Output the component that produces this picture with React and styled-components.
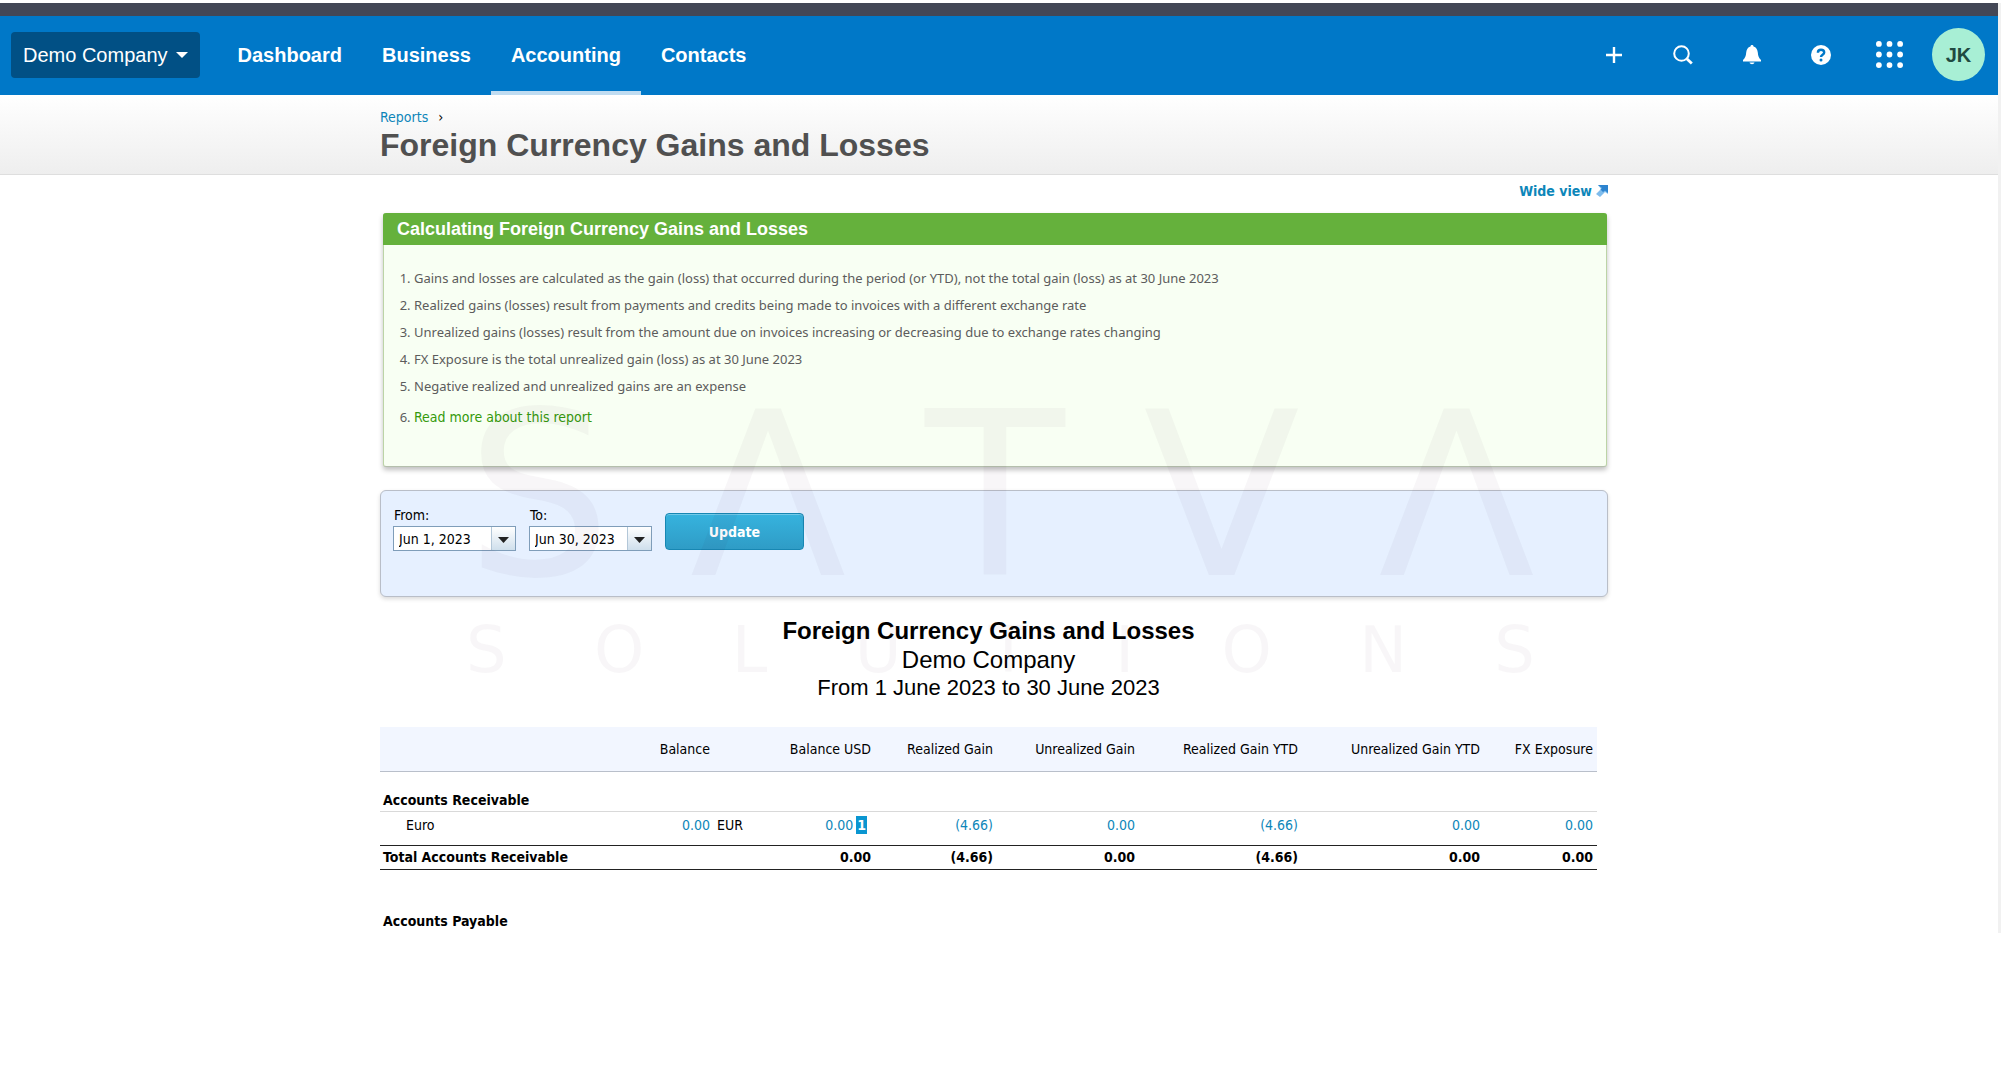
import React from 'react';
import styled, { createGlobalStyle } from 'styled-components';

const GlobalStyle = createGlobalStyle`
  * {
    box-sizing: border-box;
  }

  body {
    margin: 0;
    background: #fff;
    color: #000;
    font-family: 'DejaVu Sans Condensed', 'DejaVu Sans', sans-serif;
    font-size: 14px;
    line-height: 18px;
  }

  a {
    color: #0d86b9;
    text-decoration: none;
  }
`;

const sans = "'Liberation Sans', Arial, sans-serif";

const Page = styled.div`
  margin-top: 3px;
  border-right: 3px solid #f1f1f1;
`;

const TopStrip = styled.div`
  height: 13px;
  background: #434756;
`;

const NavBar = styled.header`
  display: flex;
  align-items: center;
  height: 79px;
  padding: 0 13px 2px 11px;
  background: #0078c8;
  font-family: ${sans};
  font-size: 20px;
`;

const OrgButton = styled.button`
  display: flex;
  align-items: center;
  gap: 8px;
  height: 46px;
  padding: 0 12px;
  margin-right: 18px;
  border: 0;
  border-radius: 4px;
  background: #015085;
  color: #fff;
  font: inherit;
`;

const NavLinks = styled.nav`
  display: flex;
  align-self: stretch;
  flex: 1;
  margin-bottom: -2px;
`;

const NavLink = styled.a`
  display: flex;
  align-items: center;
  padding: 2px 20px 0;
  border-bottom: 4px solid ${({ $active }) => ($active ? '#c0dcf1' : 'transparent')};
  color: #fff;
  font-weight: 700;
`;

const IconButton = styled.button`
  display: flex;
  align-items: center;
  justify-content: center;
  width: 69px;
  height: 46px;
  padding: 0;
  border: 0;
  background: none;
  color: #fff;
`;

const Avatar = styled.button`
  width: 53px;
  height: 53px;
  margin-left: 8px;
  padding: 0;
  border: 0;
  border-radius: 50%;
  background: #a8efd5;
  color: #1f4a41;
  font: inherit;
  font-weight: 700;
`;

const TitleBar = styled.div`
  height: 80px;
  padding: 13px 10px 0 0;
  border-bottom: 1px solid #dedede;
  background: linear-gradient(#fff, #eee);
`;

const Column = styled.div`
  position: relative;
  max-width: 1228px;
  margin: 0 auto;
`;

const Breadcrumb = styled.div`
  display: flex;
  gap: 10px;
  height: 19px;
`;

const PageTitle = styled.h1`
  margin: 0;
  color: #505050;
  font-family: ${sans};
  font-size: 32px;
  line-height: 36px;
`;

const Main = styled.main`
  padding-right: 10px;
`;

const WideView = styled.a`
  display: flex;
  align-items: center;
  justify-content: flex-end;
  gap: 4px;
  height: 38px;
  padding-bottom: 6px;
  font-weight: 700;
`;

const InfoPanel = styled.section`
  margin: 0 1px 23px 3px;
  border: 1px solid #bcd4a6;
  border-top: 0;
  border-bottom-color: #b4bfac;
  border-radius: 3px;
  background: #f8fff3;
  box-shadow: 0 3px 5px rgba(0, 0, 0, 0.25);
`;

const InfoTitle = styled.h2`
  margin: 0 -1px;
  padding: 0 14px;
  border-radius: 3px 3px 0 0;
  background: #65b13c;
  color: #fff;
  font-family: ${sans};
  font-size: 18px;
  line-height: 32px;
`;

const InfoList = styled.ol`
  margin: 0;
  padding: 20px 30px 31px;
  color: #5c5c5c;
  font-family: 'Noto Sans', sans-serif;
  font-size: 13px;
  line-height: 27px;

  a {
    color: #349a0b;
    font-family: 'DejaVu Sans Condensed', 'DejaVu Sans', sans-serif;
    font-size: 14px;
    line-height: 35px;
  }
`;

const FilterPanel = styled.form`
  display: flex;
  align-items: flex-start;
  gap: 13px;
  min-height: 107px;
  padding: 15px 12px;
  border: 1px solid #b9bec8;
  border-radius: 6px;
  background: #e6f0ff;
  box-shadow: 0 2px 4px rgba(0, 0, 0, 0.15);
`;

const Field = styled.div`
  display: flex;
  flex-direction: column;
  gap: 2px;

  label {
    padding-left: 1px;
  }
`;

const DateBox = styled.div`
  display: flex;
  width: 123px;
  height: 25px;
  border: 1px solid #7f9db9;
  background: #fff;

  input {
    flex: 1;
    min-width: 0;
    padding: 0 5px;
    border: 0;
    background: none;
    color: #000;
    font: inherit;
  }

  button {
    width: 24px;
    padding: 0;
    border: 0;
    border-left: 1px solid #b3c7d8;
    background: linear-gradient(#fff, #cfdfec);
  }
`;

const UpdateButton = styled.button`
  width: 139px;
  height: 37px;
  margin-top: 7px;
  border: 1px solid #1787b3;
  border-radius: 4px;
  background: linear-gradient(#36b3de, #2f9cc6);
  box-shadow: inset 0 1px 0 rgba(255, 255, 255, 0.3);
  color: #fff;
  font: inherit;
  font-weight: 700;
`;

const ReportHeading = styled.div`
  margin: 20px 11px 0 0;
  font-family: ${sans};
  font-size: 24px;
  line-height: 28px;
  text-align: center;

  h2 {
    margin: 0 0 1px;
    font-size: 24px;
  }

  p {
    margin: 0;
  }

  p:last-child {
    font-size: 22px;
  }
`;

const ReportTable = styled.table`
  width: calc(100% - 11px);
  margin-top: 25px;
  border-collapse: collapse;
  table-layout: fixed;

  th,
  td {
    padding: 0 4px 0 3px;
    text-align: right;
    font-weight: 400;
    white-space: nowrap;
  }

  th:first-child,
  td:first-child {
    text-align: left;
  }
`;

const HeadRow = styled.tr`
  height: 44px;
  border-bottom: 1px solid #b9bfca;
  background: #f2f6ff;
`;

const SectionRow = styled.tr`
  height: ${({ $height }) => $height}px;
  border-bottom: 1px solid ${({ $line }) => ($line ? '#d9d9d9' : 'transparent')};

  && th {
    padding-bottom: 2px;
    font-weight: 700;
    vertical-align: bottom;
  }
`;

const AccountRow = styled.tr`
  height: 34px;

  && td:first-child {
    padding-left: 26px;
  }

  && td {
    padding-top: 4px;
    vertical-align: top;
  }

  && td:nth-child(3) {
    text-align: left;
  }
`;

const TotalRow = styled.tr`
  height: 24px;
  border-top: 1px solid #222;
  border-bottom: 1px solid #222;

  && td {
    font-weight: 700;
  }
`;

const Marker = styled.span`
  display: inline-block;
  margin: 0 4px 0 3px;
  padding: 0 1px;
  background: #0a96d1;
  color: #fff;
  font-weight: 700;
`;

/* Faint brand mark laid over the report */
const Watermark = styled.div`
  position: absolute;
  top: 211px;
  left: 86px;
  right: 73px;
  color: rgba(60, 10, 60, 0.035);
  font-family: 'DejaVu Sans', sans-serif;
  pointer-events: none;
`;

const WatermarkLine = styled.div`
  display: flex;
  justify-content: space-between;
  font-size: ${({ $size }) => $size}px;
  line-height: ${({ $height }) => $height}px;
`;

const navItems = ['Dashboard', 'Business', 'Accounting', 'Contacts'];

const notes = [
  'Gains and losses are calculated as the gain (loss) that occurred during the period (or YTD), not the total gain (loss) as at 30 June 2023',
  'Realized gains (losses) result from payments and credits being made to invoices with a different exchange rate',
  'Unrealized gains (losses) result from the amount due on invoices increasing or decreasing due to exchange rates changing',
  'FX Exposure is the total unrealized gain (loss) as at 30 June 2023',
  'Negative realized and unrealized gains are an expense',
];

const columns = [
  { label: '' },
  { label: 'Balance', width: 94 },
  { label: '', width: 61 },
  { label: 'Balance USD', width: 100 },
  { label: 'Realized Gain', width: 122 },
  { label: 'Unrealized Gain', width: 142 },
  { label: 'Realized Gain YTD', width: 163 },
  { label: 'Unrealized Gain YTD', width: 182 },
  { label: 'FX Exposure', width: 113 },
];

const gains = ['(4.66)', '0.00', '(4.66)', '0.00', '0.00'];

function DateField({ id, label, value }) {
  return (
    <Field>
      <label htmlFor={id}>{label}</label>
      <DateBox>
        <input id={id} type="text" defaultValue={value} />
        <button type="button" aria-label="Open calendar">
          <svg width="11" height="6" viewBox="0 0 11 6">
            <path d="M0 0h11L5.5 6z" fill="#222" />
          </svg>
        </button>
      </DateBox>
    </Field>
  );
}

function NavIcons() {
  return (
    <>
      <IconButton aria-label="Create new">
        <svg width="16" height="16" viewBox="0 0 16 16" stroke="currentColor" strokeWidth="2.4">
          <path d="M8 0v16M0 8h16" />
        </svg>
      </IconButton>
      <IconButton aria-label="Search">
        <svg width="20" height="20" viewBox="0 0 20 20" fill="none" stroke="currentColor">
          <circle cx="8.5" cy="8.5" r="7.3" strokeWidth="2" />
          <path d="M13.8 13.8l5 4.8" strokeWidth="2.8" />
        </svg>
      </IconButton>
      <IconButton aria-label="Notifications">
        <svg width="18" height="20" viewBox="0 0 18 20" fill="currentColor">
          <path d="M9 0c.9 0 1.5.6 1.5 1.4 2.8.8 4 3.1 4.3 6.1.3 3.6 1 5.5 3.2 7.5v1.5H0V15c2.2-2 2.9-3.9 3.2-7.5.3-3 1.500-5.300 4.300-6.100C7.500.6 8.100 0 9 0z" />
          <path d="M6.500 17.600h5c-.4 1.200-1.300 1.700-2.500 1.700s-2.100-.5-2.500-1.700z" />
        </svg>
      </IconButton>
      <IconButton aria-label="Help">
        <svg width="20" height="20" viewBox="0 0 20 20" fill="none">
          <circle cx="10" cy="10" r="10" fill="currentColor" />
          <path d="M6.9 7.7C6.9 5.8 8.2 4.7 10 4.7s3.200 1.100 3.200 2.800c0 2.200-3.200 2.300-3.200 4.500" stroke="#0078c8" strokeWidth="2.4" />
          <circle cx="10" cy="14.9" r="1.5" fill="#0078c8" />
        </svg>
      </IconButton>
      <IconButton aria-label="Apps">
        <svg width="27" height="27" viewBox="0 0 28 28" fill="currentColor">
          {[3, 14, 25].map((y) => [3, 14, 25].map((x) => <circle key={`${x}-${y}`} cx={x} cy={y} r="3" />))}
        </svg>
      </IconButton>
    </>
  );
}

export default function App() {
  return (
    <Page>
      <GlobalStyle />
      <TopStrip />
      <NavBar>
        <OrgButton>
          Demo Company
          <svg width="12" height="6" viewBox="0 0 12 6">
            <path d="M0 0h12L6 6z" fill="#fff" />
          </svg>
        </OrgButton>
        <NavLinks>
          {navItems.map((item) => (
            <NavLink key={item} href="#" $active={item === 'Accounting'}>
              {item}
            </NavLink>
          ))}
        </NavLinks>
        <NavIcons />
        <Avatar>JK</Avatar>
      </NavBar>

      <TitleBar>
        <Column>
          <Breadcrumb>
            <a href="#">Reports</a>
            <span>›</span>
          </Breadcrumb>
          <PageTitle>Foreign Currency Gains and Losses</PageTitle>
        </Column>
      </TitleBar>

      <Main>
        <Column>
          <WideView href="#">
            Wide view
            <svg width="12" height="12" viewBox="0 0 12 12">
              <path d="M2 0h10v9L9 7l-5 5-4-3 5-5z" fill="#7fbcec" />
              <path d="M2 0h10v8L9 5.5 7 7 4.5 4.5 6 3z" fill="#2c83cf" />
            </svg>
          </WideView>

          <InfoPanel>
            <InfoTitle>Calculating Foreign Currency Gains and Losses</InfoTitle>
            <InfoList>
              {notes.map((note) => (
                <li key={note}>{note}</li>
              ))}
              <li>
                <a href="#">Read more about this report</a>
              </li>
            </InfoList>
          </InfoPanel>

          <FilterPanel>
            <DateField id="from" label="From:" value="Jun 1, 2023" />
            <DateField id="to" label="To:" value="Jun 30, 2023" />
            <UpdateButton type="button">Update</UpdateButton>
          </FilterPanel>

          <ReportHeading>
            <h2>Foreign Currency Gains and Losses</h2>
            <p>Demo Company</p>
            <p>From 1 June 2023 to 30 June 2023</p>
          </ReportHeading>

          <ReportTable>
            <colgroup>
              {columns.map((col, index) => (
                <col key={index} width={col.width} />
              ))}
            </colgroup>
            <thead>
              <HeadRow>
                {columns.map((col, index) => (
                  <th key={index}>{col.label}</th>
                ))}
              </HeadRow>
            </thead>
            <tbody>
              <SectionRow $height={40} $line>
                <th colSpan={9}>Accounts Receivable</th>
              </SectionRow>
              <AccountRow>
                <td>Euro</td>
                <td>
                  <a href="#">0.00</a>
                </td>
                <td>EUR</td>
                <td>
                  <a href="#">0.00</a>
                  <Marker>1</Marker>
                </td>
                {gains.map((value, index) => (
                  <td key={index}>
                    <a href="#">{value}</a>
                  </td>
                ))}
              </AccountRow>
              <TotalRow>
                <td colSpan={3}>Total Accounts Receivable</td>
                <td>0.00</td>
                {gains.map((value, index) => (
                  <td key={index}>{value}</td>
                ))}
              </TotalRow>
              <SectionRow $height={63}>
                <th colSpan={9}>Accounts Payable</th>
              </SectionRow>
            </tbody>
          </ReportTable>

          <Watermark role="img" aria-label="SATVA SOLUTIONS">
            <WatermarkLine $size={229} $height={220}>
              {['S', 'Λ', 'T', 'V', 'Λ'].map((letter, index) => (
                <span key={index}>{letter}</span>
              ))}
            </WatermarkLine>
            <WatermarkLine $size={64} $height={88}>
              {'SOLUTIONS'.split('').map((letter, index) => (
                <span key={index}>{letter}</span>
              ))}
            </WatermarkLine>
          </Watermark>
        </Column>
      </Main>
    </Page>
  );
}
